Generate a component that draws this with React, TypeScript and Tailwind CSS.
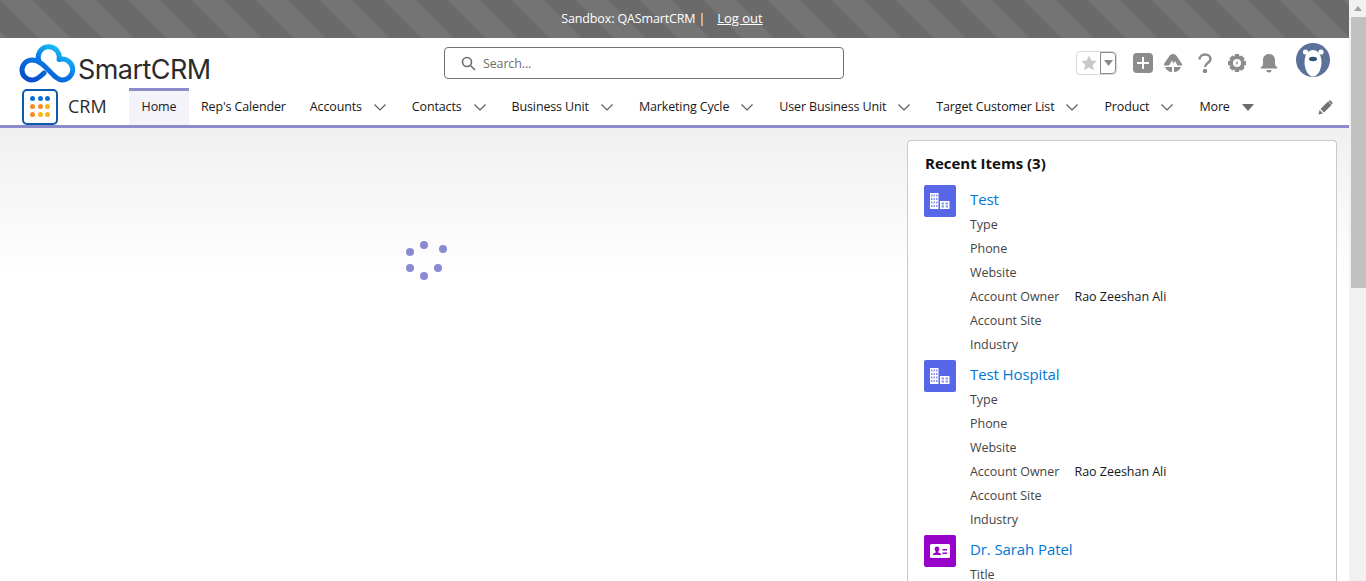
import React from "react";

const NAV: string[] = [
  "Accounts",
  "Contacts",
  "Business Unit",
  "Marketing Cycle",
  "User Business Unit",
  "Target Customer List",
  "Product",
];

function Chevron() {
  return (
    <svg width="14" height="14" viewBox="0 0 14 14" className="ml-[11px]" fill="none" stroke="#5c5c5c" strokeWidth="1.2">
      <path d="M1.500 4.500 7 10l5.500-5.500" />
    </svg>
  );
}

function Logo() {
  return (
    <svg width="58" height="42" viewBox="0 -2 58 42" fill="none">
      <defs>
        <linearGradient id="lg" x1="0" y1="1" x2="0.8" y2="0">
          <stop offset="0" stopColor="#0a47c8" />
          <stop offset="0.55" stopColor="#0878e6" />
          <stop offset="1" stopColor="#1bc8f7" />
        </linearGradient>
      </defs>
      <path
        d="M22 16 A10.500 10.500 0 1 1 42 14.500 A10.500 10.500 0 1 1 45 35 C36 35 28 15 15 15 A10 10 0 1 0 15 35 C20 35 24 31 27 28"
        stroke="url(#lg)"
        strokeWidth="5"
        strokeLinecap="round"
        strokeLinejoin="round"
      />
    </svg>
  );
}

function AppDots() {
  const c = ["#0b6fd0", "#0b6fd0", "#0b6fd0", "#f58b2e", "#f58b2e", "#f9b612", "#f58b2e", "#f9b612", "#f9b612"];
  return (
    <div className="w-[36px] h-[36px] rounded-[5px] border-2 border-[#0b5cab] grid grid-cols-3 gap-x-[3px] gap-y-[3px] p-[6px] content-center justify-center box-border">
      {c.map((x, i) => (
        <svg key={i} width="5" height="5" viewBox="0 0 5 5">
          <circle cx="2.500" cy="2.500" r="2.500" fill={x} />
        </svg>
      ))}
    </div>
  );
}

function Building() {
  const tall: number[][] = [];
  for (const y of [1.5, 5, 8.5, 12]) for (const x of [1, 3.5, 6]) tall.push([x, y, 1.5, 2]);
  const small: number[][] = [];
  for (const y of [9.5, 12.5]) for (const x of [11.5, 15.5]) small.push([x, y, 2.5, 2]);
  return (
    <div className="w-8 h-8 rounded-[2px] bg-[#5867e8] flex items-center justify-center shrink-0">
      <svg width="20" height="16" viewBox="0 0 20 16">
        <rect x="0" y="0" width="8.500" height="16" fill="#fff" />
        <rect x="10" y="8" width="9.500" height="8" fill="#fff" />
        {[...tall, ...small].map(([x, y, w, h], i) => (
          <rect key={i} x={x} y={y} width={w} height={h} fill="#8c97ef" />
        ))}
      </svg>
    </div>
  );
}

function Contact() {
  return (
    <div className="w-8 h-8 rounded-[2px] bg-[#9602c7] flex items-center justify-center shrink-0">
      <svg width="20" height="14" viewBox="0 0 20 14" fill="#fff">
        <path fillRule="evenodd" d="M1.500 0h17A1.500 1.500 0 0 1 20 1.500v11a1.500 1.500 0 0 1-1.500 1.500h-17A1.500 1.500 0 0 1 0 12.500v-11A1.500 1.500 0 0 1 1.500 0zM7 2.500A2.300 2.300 0 0 0 4.700 5c0 1 .5 2 1 2.500v1L3 9.800V11h8V9.800L8.300 8.500v-1c.5-.5 1-1.500 1-2.500A2.300 2.300 0 0 0 7 2.500zM12.500 5v1.500H17V5zm0 3.500V10H17V8.500z" />
      </svg>
    </div>
  );
}

function Field({ label, value }: { label: string; value?: string }) {
  return (
    <div className="h-6 flex items-center leading-6 text-[#444] tracking-[-0.03px]">
      <span className="w-[104.500px]">{label}</span>
      {value && <span className="text-[#181818]">{value}</span>}
    </div>
  );
}

function Item({ icon, name, fields }: { icon: React.ReactNode; name: string; fields: [string, string?][] }) {
  return (
    <div className="flex gap-[14px] h-[175px]">
      <div className="-mt-[2px]">{icon}</div>
      <div className="flex-1">
        <div className="text-[15px] leading-[20px] h-[24px] pt-[2px] text-[#0176d3] box-content tracking-[-0.1px]">{name}</div>
        {fields.map(([l, v]) => (
          <Field key={l} label={l} value={v} />
        ))}
      </div>
    </div>
  );
}

const ACC: [string, string?][] = [
  ["Type"],
  ["Phone"],
  ["Website"],
  ["Account Owner", "Rao Zeeshan Ali"],
  ["Account Site"],
  ["Industry"],
];

export default function App() {
  return (
    <div className="h-[581px] w-[1366px] overflow-hidden flex bg-white font-['Open_Sans','Noto_Sans',sans-serif] text-[12.500px] tracking-[-0.14px] text-[#181818]">
      <div className="w-[1349px] h-full flex flex-col overflow-hidden">
        <div className="h-[38px] shrink-0 flex items-center justify-center gap-[12px] text-white bg-[repeating-linear-gradient(45deg,#747474_0px,#747474_4.25px,#6a6a6a_4.25px,#6a6a6a_26.88px,#747474_26.88px,#747474_45.25px)] pr-[25px]">
          <span className="tracking-[-0.14px]">Sandbox: QASmartCRM |</span>
          <a className="underline text-[13px] tracking-normal">Log out</a>
        </div>

        <div className="h-[50px] shrink-0 flex items-center relative">
          <div className="w-[444px] flex items-start pl-[17px] pt-[5px] h-full shrink-0">
            <Logo />
            <span className="font-['Inter',sans-serif] text-[27px] leading-[30px] tracking-[-0.55px] text-[#2b2b2b] ml-[3px] mt-[12px]">SmartCRM</span>
          </div>
          <div className="w-[400px] h-[32px] rounded-[4px] border border-[#747474] flex items-center pl-[16px] gap-[7px] text-[#706e6b] shrink-0">
            <svg width="15" height="15" viewBox="0 0 15 15" fill="none" stroke="#706e6b" strokeWidth="1.600">
              <circle cx="6" cy="6" r="4.500" />
              <path d="m9.500 9.500 4.500 4.500" />
            </svg>
            <span className="pt-[2px]">Search...</span>
          </div>
          <div className="flex items-center ml-[232px]">
            <div className="w-[41px] h-[24px] rounded-[4px] border border-[#d8d8d8] flex overflow-hidden">
              <div className="w-[23px] flex items-center justify-center">
                <svg width="16" height="16" viewBox="0 0 16 16" fill="#c9c9c9">
                  <path d="M8 0.500l2.300 5 5.500.6-4 3.700 1.100 5.400L8 12.500l-4.900 2.700 1.100-5.400-4-3.700 5.500-.6z" />
                </svg>
              </div>
              <div className="flex-1 border border-[#8a8a8a] rounded-r-[4px] flex items-center justify-center">
                <svg width="9" height="6" viewBox="0 0 9 6" fill="#8a8a8a">
                  <path d="M0 0h9L4.500 6z" />
                </svg>
              </div>
            </div>
            <div className="w-[20px] h-[20px] ml-[16px] rounded-[4px] bg-[#8c8c8c] flex items-center justify-center">
              <svg width="14" height="14" viewBox="0 0 14 14" fill="#fff">
                <path d="M6 1h2v5h5v2H8v5H6V8H1V6h5z" />
              </svg>
            </div>
            <svg className="ml-[10px]" width="20" height="20" viewBox="0 0 20 20" fill="#8c8c8c">
              <path d="M10 1C12 1 13 2 14 3.500L19 11C19.500 12 19 12.500 18 12.500H14.500L12 8 10.500 10.500 9 7.500 6 12.500H2C1 12.500 .5 12 1 11L6 3.500C7 2 8 1 10 1z" />
              <path d="M2 14H9V19C6 19 3.500 17.500 2 14zM11 14H18C16.500 17.500 14 19 11 19z" />
            </svg>
            <svg className="ml-[15px]" width="14" height="20" viewBox="0 0 14 20" fill="none" stroke="#8c8c8c" strokeWidth="2.500">
              <path d="M1.500 6.500C1.500 3.500 4 1.500 7 1.500s5.500 2 5.500 4.500c0 4-5.500 4-5.500 8" />
              <circle cx="7" cy="18" r="1" fill="#8c8c8c" />
            </svg>
            <svg className="ml-[15px]" width="20" height="20" viewBox="0 0 20 20" fill="#8c8c8c">
              <path fillRule="evenodd" d="M8 1h4l.6 2.500 2.200-.9 2.800 2.800-1 2.200L19 8.300v3.900l-2.400.6 1 2.200-2.800 2.800-2.200-1L12 19H8l-.6-2.400-2.200 1-2.800-2.800 1-2.200L1 12.200V8.300l2.400-.7-1-2.200 2.800-2.800 2.200.9zM10 6a4 4 0 1 0 0 8 4 4 0 0 0 0-8z" />
              <path d="M11 7l-2.500 3.500h1.500L9 13l2.500-3.500H10z" />
            </svg>
            <svg className="ml-[12px]" width="20" height="20" viewBox="0 0 20 20" fill="#8c8c8c">
              <path d="M10 1c3.500 0 6 2.500 6 6v4c0 1.500 1 2.500 2 3 .7.400.5 1.500-.3 1.500H2.300c-.8 0-1-1.100-.3-1.500 1-.5 2-1.500 2-3V7c0-3.500 2.500-6 6-6zM7.500 17h5a2.500 2.500 0 0 1-5 0z" />
            </svg>
            <svg className="ml-[17px] -mt-[6px]" width="34" height="34" viewBox="0 0 34 34">
              <circle cx="17" cy="17" r="17" fill="#5a7199" />
              <circle cx="9.500" cy="9" r="2.600" fill="#fff" />
              <circle cx="25" cy="9" r="2.600" fill="#fff" />
              <path d="M17 7C22 7 25.500 12 25.500 19 25.500 26 22 33.500 17 33.500 12 33.500 8.500 26 8.500 19 8.500 12 12 7 17 7z" fill="#fff" />
              <ellipse cx="17" cy="16" rx="4" ry="2.200" fill="#34507a" />
            </svg>
          </div>
        </div>

        <div className="h-[40px] shrink-0 flex items-stretch border-b-[3px] border-[#8c8ccd] relative">
          <div className="w-[129px] flex items-center pl-[22px] shrink-0">
            <AppDots />
            <span className="text-[18px] tracking-normal ml-[10px] text-[#2b2b2b]">CRM</span>
          </div>
          <div className="w-[60px] border-t-[3px] border-[#8c8ccd] bg-[#f3f3f9] flex items-center justify-center shrink-0 pb-[2px]">Home</div>
          <div className="flex items-center pl-[12px] pt-[1px] whitespace-nowrap">
            <span className="mr-[24px]">Rep's Calender</span>
            {NAV.map((n) => (
              <span key={n} className="flex items-center mr-[25px]">
                {n}
                <Chevron />
              </span>
            ))}
            <span className="flex items-center">
              More
              <svg className="ml-[12px]" width="12" height="7" viewBox="0 0 12 7" fill="#6a6a6a">
                <path d="M0 0h12L6 7z" />
              </svg>
            </span>
          </div>
          <div className="flex-1 flex items-center justify-end pr-[16px] pt-[2px]">
            <svg width="15" height="15" viewBox="0 0 15 15" fill="#747474">
              <path d="M0.500 14.500l1-4.500 3.500 3.500zM2.500 9l7.500-7.500 3.500 3.500L6 12.500zM11 .8c.6-.5 1.300-.5 1.800 0l1.400 1.400c.5.500.5 1.200 0 1.800l-.5.500-3.200-3.200z" />
            </svg>
          </div>
        </div>

        <div className="flex-1 flex bg-[linear-gradient(to_bottom,#f0f0f0_0px,#ffffff_150px,#ffffff_100%)] min-h-0">
          <div className="w-[907px] shrink-0 flex justify-center pt-[112px] pr-[54px] box-border">
            <svg width="43" height="42" viewBox="0 0 43 42" fill="#8a8ad4">
              <circle cx="5" cy="12" r="4" />
              <circle cx="19" cy="5" r="4" />
              <circle cx="38" cy="9" r="4" />
              <circle cx="5" cy="28" r="4" />
              <circle cx="33" cy="28" r="4" />
              <circle cx="19" cy="36" r="4" />
            </svg>
          </div>
          <div className="w-[430px] mt-[12px] rounded-t-[4px] border border-b-0 border-[#c9c9c9] bg-white px-4 pt-[12px] overflow-hidden box-border">
            <div className="text-[15px] tracking-normal leading-[21px] font-bold text-[#111] mb-[13px] pl-[1px]">Recent Items (3)</div>
            <Item icon={<Building />} name="Test" fields={ACC} />
            <Item icon={<Building />} name="Test Hospital" fields={ACC} />
            <Item icon={<Contact />} name="Dr. Sarah Patel" fields={[["Title"]]} />
          </div>
        </div>
      </div>

      <div className="w-[17px] h-full bg-[#f1f1f1] flex flex-col items-center pl-[1px]">
        <div className="h-[17px] flex items-center justify-center">
          <svg width="8" height="5" viewBox="0 0 8 5" fill="#a3a3a3">
            <path d="M0 5 4 0l4 5z" />
          </svg>
        </div>
        <div className="w-[15px] h-[271px] bg-[#c1c1c1]" />
      </div>
    </div>
  );
}
